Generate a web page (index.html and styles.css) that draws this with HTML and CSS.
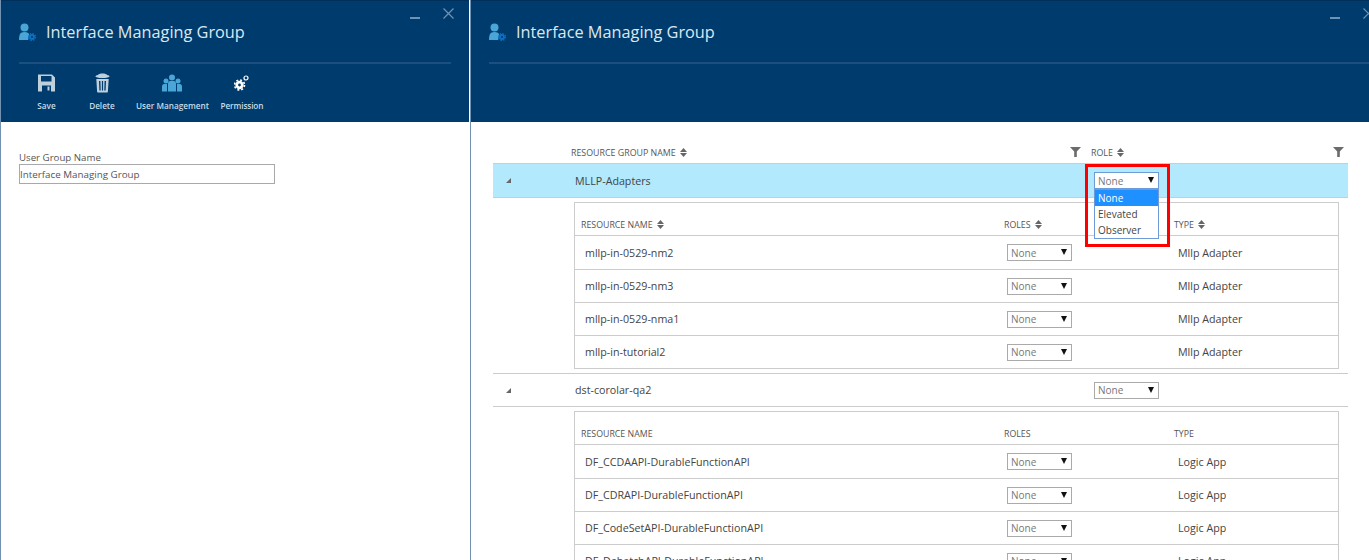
FILE: index.html
```html
<!DOCTYPE html>
<html lang="en">
<head>
  <meta charset="UTF-8" />
  <title>Interface Managing Group</title>
  <link rel="stylesheet" href="styles.css">
</head>
<body>
  <svg class="defs" width="0" height="0">
    <symbol id="icon-user" viewBox="0 0 17 18">
      <circle cx="5.500" cy="4.500" r="4" fill="#4aa6d6" />
      <path d="M0 17c0-2 .2-4 .8-5.500C1.300 10 2.600 9 5.500 9s4.200 1 4.700 2.500c.1.500.2 1 .3 1.500-.8.800-1.300 1.800-1.300 3 0 .4 0 .7.100 1z" fill="#4aa6d6" />
      <circle cx="13" cy="14" r="2" fill="none" stroke="#0b72c4" stroke-width="1.800" />
      <circle cx="13" cy="14" r="3.500" fill="none" stroke="#0b72c4" stroke-width="1.200" stroke-dasharray="1.400 1.350" />
    </symbol>
    <symbol id="icon-sort" viewBox="0 0 7 9">
      <path d="M3.500 0L7 4H0zM0 5h7L3.500 9z" fill="#666" />
    </symbol>
    <symbol id="icon-filter" viewBox="0 0 11 10">
      <path d="M0 0h11L6.800 4.500V10H4.200V4.500z" fill="#6b6b6b" />
    </symbol>
  </svg>

  <section class="blade blade-left">
    <header class="blade-head">
      <div class="title-row">
        <svg class="title-icon"><use href="#icon-user" /></svg>
        <h1>Interface Managing Group</h1>
        <div class="window-btns">
          <span class="btn-min"></span>
          <svg class="btn-close" viewBox="0 0 11 11"><path d="M.5.500l10 10M10.500.500l-10 10" stroke="#6f93b3" stroke-width="1.200" fill="none" /></svg>
        </div>
      </div>
      <div class="toolbar">
        <div class="tool tool-save">
          <svg viewBox="0 0 17 17" width="17" height="17">
            <path fill-rule="evenodd" d="M0 0h14l3 3v14H0zM3 1.500V7h10.500V1.500zM4 11v6h9v-6zM9.500 12h2v4h-2z" fill="#bdd0dc" />
          </svg>
          <span>Save</span>
        </div>
        <div class="tool tool-delete">
          <svg viewBox="0 0 15 19" width="15" height="19">
            <path d="M3 1.500C3.500.5 5 0 7.500 0S11.500.5 12 1.500c1.500.2 2.500.7 2.500 1.500S11.500 4.500 7.500 4.500.5 3.800.5 3s1-1.300 2.500-1.500z" fill="#bdd0dc" />
            <path fill-rule="evenodd" d="M1.300 5.500h12.400l-.8 12.500c0 .6-.4 1-1 1H3.100c-.6 0-1-.4-1-1zM4 7.500l.4 9.500h1.300L5.400 7.500zM6.900 7.500V17h1.200V7.500zM9.600 7.500L9.300 17h1.300L11 7.500z" fill="#bdd0dc" />
          </svg>
          <span>Delete</span>
        </div>
        <div class="tool tool-users">
          <svg viewBox="0 0 20 17" width="20" height="17">
            <circle cx="10" cy="3" r="3" fill="#4aa6d6" />
            <circle cx="4" cy="6.500" r="2.500" fill="#4aa6d6" />
            <circle cx="16" cy="6.500" r="2.500" fill="#4aa6d6" />
            <path d="M6 17V9c0-1.500 1-2.500 2-2.500h4c1 0 2 1 2 2.500v8z" fill="#4aa6d6" />
            <path d="M0 17v-5c0-1.500 1-2.500 2-2.500h3V17zM15 17V9.500h3c1 0 2 1 2 2.500v5z" fill="#4aa6d6" />
          </svg>
          <span>User Management</span>
        </div>
        <div class="tool tool-perm">
          <svg viewBox="0 0 15 16" width="15" height="16">
            <circle cx="5.500" cy="10" r="2.800" fill="none" stroke="#fff" stroke-width="2.800" />
            <circle cx="5.500" cy="10" r="5" fill="none" stroke="#fff" stroke-width="1.600" stroke-dasharray="2 1.930" />
            <circle cx="12" cy="3" r="2" fill="none" stroke="#fff" stroke-width="1.200" />
          </svg>
          <span>Permission</span>
        </div>
      </div>
    </header>
    <div class="form-body">
      <label class="field-label" for="groupName">User Group Name</label>
      <input class="field-input" id="groupName" type="text" value="Interface Managing Group" />
    </div>
  </section>

  <section class="blade blade-right">
    <header class="blade-head">
      <div class="title-row">
        <svg class="title-icon"><use href="#icon-user" /></svg>
        <h1>Interface Managing Group</h1>
        <div class="window-btns">
          <span class="btn-min"></span>
          <svg class="btn-close" viewBox="0 0 11 11"><path d="M.5.500l10 10M10.500.500l-10 10" stroke="#6f93b3" stroke-width="1.200" fill="none" /></svg>
        </div>
      </div>
    </header>

    <div class="groups">
      <div class="group-head">
        <div class="head-name">RESOURCE GROUP NAME <svg class="sort"><use href="#icon-sort" /></svg>
          <svg class="filter"><use href="#icon-filter" /></svg></div>
        <div class="head-role">ROLE <svg class="sort"><use href="#icon-sort" /></svg>
          <svg class="filter filter-last"><use href="#icon-filter" /></svg></div>
      </div>

      <div class="group-row selected">
        <div class="expander"><i></i></div>
        <div class="group-name">MLLP-Adapters</div>
        <div class="group-role">
          <div class="select focused"><select><option>None</option></select></div>
          <ul class="options">
            <li class="active">None</li>
            <li>Elevated</li>
            <li>Observer</li>
          </ul>
          <div class="callout"></div>
        </div>
      </div>

      <div class="detail">
        <div class="detail-head">
          <div>RESOURCE NAME <svg class="sort"><use href="#icon-sort" /></svg></div>
          <div>ROLES <svg class="sort"><use href="#icon-sort" /></svg></div>
          <div>TYPE <svg class="sort"><use href="#icon-sort" /></svg></div>
        </div>
        <div class="detail-row">
          <div class="c-name">mllp-in-0529-nm2</div>
          <div class="c-role"><div class="select"><select><option>None</option></select></div></div>
          <div class="c-type">Mllp Adapter</div>
        </div>
        <div class="detail-row">
          <div class="c-name">mllp-in-0529-nm3</div>
          <div class="c-role"><div class="select"><select><option>None</option></select></div></div>
          <div class="c-type">Mllp Adapter</div>
        </div>
        <div class="detail-row">
          <div class="c-name">mllp-in-0529-nma1</div>
          <div class="c-role"><div class="select"><select><option>None</option></select></div></div>
          <div class="c-type">Mllp Adapter</div>
        </div>
        <div class="detail-row">
          <div class="c-name">mllp-in-tutorial2</div>
          <div class="c-role"><div class="select"><select><option>None</option></select></div></div>
          <div class="c-type">Mllp Adapter</div>
        </div>
      </div>

      <div class="group-row">
        <div class="expander"><i></i></div>
        <div class="group-name">dst-corolar-qa2</div>
        <div class="group-role">
          <div class="select"><select><option>None</option></select></div>
        </div>
      </div>

      <div class="detail">
        <div class="detail-head">
          <div>RESOURCE NAME</div>
          <div>ROLES</div>
          <div>TYPE</div>
        </div>
        <div class="detail-row">
          <div class="c-name">DF_CCDAAPI-DurableFunctionAPI</div>
          <div class="c-role"><div class="select"><select><option>None</option></select></div></div>
          <div class="c-type">Logic App</div>
        </div>
        <div class="detail-row">
          <div class="c-name">DF_CDRAPI-DurableFunctionAPI</div>
          <div class="c-role"><div class="select"><select><option>None</option></select></div></div>
          <div class="c-type">Logic App</div>
        </div>
        <div class="detail-row">
          <div class="c-name">DF_CodeSetAPI-DurableFunctionAPI</div>
          <div class="c-role"><div class="select"><select><option>None</option></select></div></div>
          <div class="c-type">Logic App</div>
        </div>
        <div class="detail-row">
          <div class="c-name">DF_DebatchAPI-DurableFunctionAPI</div>
          <div class="c-role"><div class="select"><select><option>None</option></select></div></div>
          <div class="c-type">Logic App</div>
        </div>
      </div>
    </div>
  </section>
</body>
</html>
```

FILE: styles.css
```css
* {
  box-sizing: border-box;
}

html,
body {
  margin: 0;
  height: 560px;
  overflow: hidden;
}

body {
  display: flex;
  font-family: "Open Sans", "Noto Sans", sans-serif;
  color: #444;
  background: #fff;
}

.defs {
  position: absolute;
}

.blade {
  flex-shrink: 0;
  height: 560px;
  border-left: 1px solid #7391b0;
}

.blade-left {
  width: 469px;
  margin-right: 1px;
}

.blade-right {
  width: 919px;
}

.blade-head {
  height: 122px;
  padding: 0 18px;
  background: #003b6d;
  border-top: 1px solid #00305a;
  color: #fff;
}

.title-row {
  display: flex;
  align-items: center;
  height: 63px;
  border-bottom: 2px solid #1a4f7f;
}

.title-icon {
  width: 17px;
  height: 18px;
  margin-right: 10px;
}

h1 {
  margin: 0;
  font-size: 16.300px;
  font-weight: 400;
  color: #dce8f0;
}

.window-btns {
  display: flex;
  align-items: flex-start;
  align-self: flex-start;
  margin-left: auto;
  margin-right: -3px;
  padding-top: 7px;
}

.btn-min {
  width: 10px;
  height: 2px;
  margin: 9px 23px 0 0;
  background: #6f93b3;
}

.btn-close {
  width: 11px;
  height: 11px;
}

.toolbar {
  display: flex;
  padding-top: 9px;
}

.tool {
  display: flex;
  flex-direction: column;
  align-items: center;
  min-width: 56px;
  padding: 0 6px;
  font-size: 8.200px;
  font-weight: 600;
  color: #c6dbe8;
}

.tool-save {
  min-width: 55px;
}

.tool-perm {
  min-width: 54px;
  padding: 0 5px;
  letter-spacing: -0.1px;
}

.tool svg {
  height: 20px;
  margin-bottom: 7px;
}

.form-body {
  padding: 29px 18px;
}

.field-label {
  display: block;
  font-size: 9.700px;
  line-height: 13px;
  color: #555;
}

.field-input {
  display: block;
  width: 256px;
  height: 20px;
  padding: 1px 0 0;
  border: 1px solid #a9a9a9;
  font-family: inherit;
  font-size: 9.800px;
  color: #555;
}

.groups {
  padding: 19px 41px 0 22px;
  font-size: 10.700px;
}

.group-head,
.group-row {
  display: grid;
  grid-template-columns: 78px 520px 1fr;
}

.group-head {
  height: 23px;
  padding-top: 2px;
  border-bottom: 1px solid #ccc;
  font-size: 8.850px;
  color: #555;
  align-items: center;
}

.head-name {
  grid-column: 2;
  position: relative;
}

.head-role {
  grid-column: 3;
  position: relative;
}

.sort {
  width: 7px;
  height: 9px;
  margin-left: 2px;
  vertical-align: -1px;
}

.filter {
  position: absolute;
  right: 10px;
  top: 0;
  width: 11px;
  height: 10px;
}

.filter-last {
  right: 4px;
}

.group-row {
  height: 34px;
  align-items: center;
  border-bottom: 1px solid #ccc;
  color: #444;
}

.detail + .group-row {
  border-top: 1px solid #ccc;
}

.group-row.selected {
  background: #b2e9fc;
}

.expander i {
  display: block;
  width: 0;
  height: 0;
  margin-left: 13px;
  border-style: solid;
  border-width: 0 0 5px 5px;
  border-color: transparent transparent #666 transparent;
}

.group-name {
  padding-left: 4px;
}

.group-role {
  position: relative;
  padding-left: 3px;
}

.select {
  position: relative;
  width: 65px;
  height: 17px;
}

.select::after {
  content: "";
  position: absolute;
  right: 5px;
  top: 5px;
  border-style: solid;
  border-width: 6px 3.500px 0;
  border-color: #111 transparent transparent;
  pointer-events: none;
}

.select select {
  display: block;
  width: 100%;
  height: 100%;
  padding: 0 0 0 3px;
  appearance: none;
  border: 1px solid #aaa;
  border-radius: 0;
  background: #fff;
  font-family: inherit;
  font-size: 10px;
  color: #777;
}

.select.focused select {
  border-color: #6e9bd8;
}

.options {
  position: absolute;
  left: 3px;
  top: 17px;
  z-index: 2;
  width: 65px;
  margin: 0;
  padding: 0;
  list-style: none;
  background: #fff;
  border: 1px solid #6e9bd8;
  font-size: 10px;
  line-height: 16px;
  color: #444;
}

.options li {
  padding-left: 3px;
}

.options .active {
  background: #1e90ff;
  color: #fff;
}

.callout {
  position: absolute;
  left: -6px;
  top: -8px;
  z-index: 3;
  width: 85px;
  height: 83px;
  border: 3px solid #f00;
  pointer-events: none;
}

.detail {
  margin: 4px 9px 4px 81px;
  border: 1px solid #ccc;
  border-bottom: 0;
}

.detail-head,
.detail-row {
  display: grid;
  grid-template-columns: 424px 170px 1fr;
  align-items: center;
  height: 33px;
  border-bottom: 1px solid #ccc;
}

.detail-head {
  padding-top: 12px;
  font-size: 8.800px;
  color: #555;
}

.detail-head > div {
  padding-left: 5px;
}

.detail-head > div:first-child {
  padding-left: 6px;
}

.detail-head + .detail-row {
  height: 34px;
}

.c-name {
  padding: 0 0 1px 10px;
}

.c-type {
  padding: 0 0 1px 9px;
}

.detail-head + .detail-row .c-name,
.detail-head + .detail-row .c-type {
  padding-bottom: 0;
}

.c-role {
  padding-left: 8px;
}
```
